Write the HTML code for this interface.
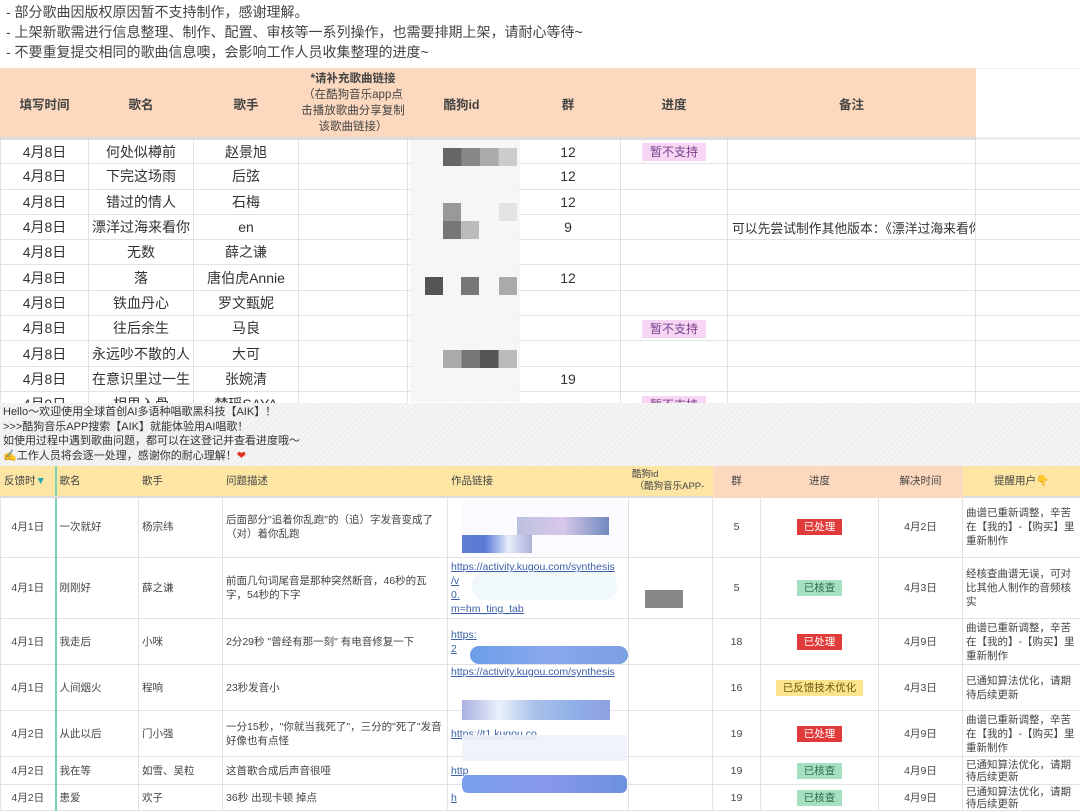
<!DOCTYPE html>
<html><head><meta charset="utf-8"><style>
*{margin:0;padding:0;box-sizing:border-box}
body{width:1080px;height:810px;overflow:hidden;background:#fff;position:relative;font-family:"Liberation Sans","Noto Sans CJK SC",sans-serif;color:#333}
.notes{position:absolute;left:6px;top:2px;font-size:14px;line-height:20px;color:#444}
table{border-collapse:collapse;table-layout:fixed;position:absolute;left:0}
td{border:1px solid #e2e2e2;overflow:hidden;white-space:nowrap}
#t1{top:68px;width:1080px;font-size:14px;color:#333}
#t1 td{text-align:center;height:25.3px;padding:0}
#t1 tr.h td{background:#fcd9be;height:70px;font-weight:bold;font-size:12.5px;color:#444;border-color:#fcd9be;border-bottom:3px solid #ddd}
#t1 tr.h td.w{background:#fff;border-color:#eee}
.pk{background:#f6d6f4;color:#7a3f8c;font-size:12px;padding:2px 8px}
.mid{position:absolute;left:0;top:403px;width:1080px;height:63px;background:repeating-linear-gradient(135deg,#f4f4f4 0 3px,#ececec 3px 4px)}
.mid div{font-size:11px;line-height:14.5px;color:#333;padding-left:3px;padding-top:2px}
#t2{top:466px;width:1080px;font-size:10.5px;color:#444}
#t2 td{padding:0 3px;white-space:normal;line-height:14px}
#t2 td .cl{max-height:24px;overflow:hidden;line-height:12px}
#t2 tr.h td{background:#fde6a4;height:30px;border-color:#fde6a4;border-bottom:2px solid #ddd;font-size:10.5px;white-space:nowrap}
#t2 tr.h td.p{background:#fcd9be;border-color:#fcd9be}
#t2 td.c{text-align:center}
.red{background:#e03a3a;color:#fff;padding:2px 7px;font-size:10.5px}
.grn{background:#a6e0c3;color:#2f6e4f;padding:2px 7px;font-size:10.5px}
.yl{background:#fbe48c;color:#6b5a10;padding:2px 7px;font-size:10.5px}
.ab{position:absolute}
.lnk{color:#3a5ea8;text-decoration:underline}
</style></head><body>
<div class="notes">- 部分歌曲因版权原因暂不支持制作，感谢理解。<br>- 上架新歌需进行信息整理、制作、配置、审核等一系列操作，也需要排期上架，请耐心等待~<br>- 不要重复提交相同的歌曲信息噢，会影响工作人员收集整理的进度~</div>
<table id="t1">
<colgroup><col style="width:88px"><col style="width:105px"><col style="width:105px"><col style="width:109px"><col style="width:108px"><col style="width:105px"><col style="width:107px"><col style="width:248px"><col style="width:105px"></colgroup>
<tr class="h"><td>填写时间</td><td>歌名</td><td>歌手</td><td style="font-weight:normal;line-height:16px;white-space:normal;font-size:11.5px"><b>*请补充歌曲链接</b><br>（在酷狗音乐app点击播放歌曲分享复制该歌曲链接）</td><td>酷狗id</td><td>群</td><td>进度</td><td>备注</td><td class="w"></td></tr>
<tr><td>4月8日</td><td>何处似樽前</td><td>赵景旭</td><td></td><td></td><td>12</td><td><span class="pk">暂不支持</span></td><td></td><td></td></tr>
<tr><td>4月8日</td><td>下完这场雨</td><td>后弦</td><td></td><td></td><td>12</td><td></td><td></td><td></td></tr>
<tr><td>4月8日</td><td>错过的情人</td><td>石梅</td><td></td><td></td><td>12</td><td></td><td></td><td></td></tr>
<tr><td>4月8日</td><td>漂洋过海来看你</td><td>en</td><td></td><td></td><td>9</td><td></td><td style="text-align:left;padding-left:4px;font-size:12.8px">可以先尝试制作其他版本：《漂洋过海来看你》刘明湘</td><td></td></tr>
<tr><td>4月8日</td><td>无数</td><td>薛之谦</td><td></td><td></td><td></td><td></td><td></td><td></td></tr>
<tr><td>4月8日</td><td>落</td><td>唐伯虎Annie</td><td></td><td></td><td>12</td><td></td><td></td><td></td></tr>
<tr><td>4月8日</td><td>铁血丹心</td><td>罗文甄妮</td><td></td><td></td><td></td><td></td><td></td><td></td></tr>
<tr><td>4月8日</td><td>往后余生</td><td>马良</td><td></td><td></td><td></td><td><span class="pk">暂不支持</span></td><td></td><td></td></tr>
<tr><td>4月8日</td><td>永远吵不散的人</td><td>大可</td><td></td><td></td><td></td><td></td><td></td><td></td></tr>
<tr><td>4月8日</td><td>在意识里过一生</td><td>张婉清</td><td></td><td></td><td>19</td><td></td><td></td><td></td></tr>
<tr><td>4月9日</td><td>相思入骨</td><td>梦瑶SAYA</td><td></td><td></td><td></td><td><span class="pk">暂不支持</span></td><td></td><td></td></tr>
</table>
<div class="ab" style="left:410px;top:140px;width:110px;height:262px;background:rgba(245,245,245,.85)"></div>
<div class="ab" style="left:443px;top:148px;width:74px;height:18px;background:linear-gradient(90deg,#666 0 25%,#888 25% 50%,#aaa 50% 75%,#ccc 75%)"></div>
<div class="ab" style="left:443px;top:203px;width:18px;height:18px;background:#999"></div>
<div class="ab" style="left:499px;top:203px;width:18px;height:18px;background:#e3e3e3"></div>
<div class="ab" style="left:443px;top:221px;width:36px;height:18px;background:linear-gradient(90deg,#777 50%,#bbb 50%)"></div>
<div class="ab" style="left:425px;top:277px;width:18px;height:18px;background:#555"></div>
<div class="ab" style="left:461px;top:277px;width:18px;height:18px;background:#777"></div>
<div class="ab" style="left:499px;top:277px;width:18px;height:18px;background:#aaa"></div>
<div class="ab" style="left:443px;top:350px;width:74px;height:18px;background:linear-gradient(90deg,#aaa 0 25%,#777 25% 50%,#555 50% 75%,#bbb 75%)"></div>
<div class="mid"><div>Hello～欢迎使用全球首创AI多语种唱歌黑科技【AIK】！<br>&gt;&gt;&gt;酷狗音乐APP搜索【AIK】就能体验用AI唱歌！<br>如使用过程中遇到歌曲问题，都可以在这登记并查看进度哦～<br><span style="color:#e8a33a">✍</span>工作人员将会逐一处理，感谢你的耐心理解！<span style="color:#d32">❤</span></div></div>
<table id="t2">
<colgroup><col style="width:55px"><col style="width:83px"><col style="width:84px"><col style="width:225px"><col style="width:181px"><col style="width:84px"><col style="width:48px"><col style="width:118px"><col style="width:84px"><col style="width:118px"></colgroup>
<tr class="h"><td style="border-right:2px solid #7fd0b5">反馈时<span style="color:#2aa">▼</span></td><td>歌名</td><td>歌手</td><td>问题描述</td><td>作品链接</td><td style="line-height:12px;font-size:9.5px">酷狗id<br>&nbsp;（酷狗音乐APP-</td><td class="p c">群</td><td class="p c">进度</td><td class="p c">解决时间</td><td class="c">提醒用户<span style="color:#f5c040">👇</span></td></tr>
<tr style="height:61px"><td class="c" style="border-right:2px solid #7fd0b5">4月1日</td><td>一次就好</td><td>杨宗纬</td><td>后面部分"追着你乱跑"的（追）字发音变成了（对）着你乱跑</td><td></td><td></td><td class="c">5</td><td class="c"><span class="red">已处理</span></td><td class="c">4月2日</td><td>曲谱已重新调整，辛苦在【我的】-【购买】里重新制作</td></tr>
<tr style="height:61px"><td class="c" style="border-right:2px solid #7fd0b5">4月1日</td><td>刚刚好</td><td>薛之谦</td><td>前面几句词尾音是那种突然断音，46秒的瓦字，54秒的下字</td><td><span class="lnk">https://activity.kugou.com/synthesis</span><br><span class="lnk">/v</span><br><span class="lnk">0.</span><br><span class="lnk">m=hm_ting_tab</span></td><td></td><td class="c">5</td><td class="c"><span class="grn">已核查</span></td><td class="c">4月3日</td><td>经核查曲谱无误，可对比其他人制作的音频核实</td></tr>
<tr style="height:46px"><td class="c" style="border-right:2px solid #7fd0b5">4月1日</td><td>我走后</td><td>小咪</td><td>2分29秒 "曾经有那一刻" 有电音修复一下</td><td><span class="lnk">https:</span><br><span class="lnk">2</span></td><td></td><td class="c">18</td><td class="c"><span class="red">已处理</span></td><td class="c">4月9日</td><td>曲谱已重新调整，辛苦在【我的】-【购买】里重新制作</td></tr>
<tr style="height:46px"><td class="c" style="border-right:2px solid #7fd0b5">4月1日</td><td>人间烟火</td><td>程响</td><td>23秒发音小</td><td style="vertical-align:top"><span class="lnk">https://activity.kugou.com/synthesis</span></td><td></td><td class="c">16</td><td class="c"><span class="yl">已反馈技术优化</span></td><td class="c">4月3日</td><td>已通知算法优化，请期待后续更新</td></tr>
<tr style="height:46px"><td class="c" style="border-right:2px solid #7fd0b5">4月2日</td><td>从此以后</td><td>门小强</td><td>一分15秒，"你就当我死了"，三分的"死了"发音好像也有点怪</td><td><span class="lnk">https://t1.kugou.co</span></td><td></td><td class="c">19</td><td class="c"><span class="red">已处理</span></td><td class="c">4月9日</td><td>曲谱已重新调整，辛苦在【我的】-【购买】里重新制作</td></tr>
<tr style="height:28px"><td class="c" style="border-right:2px solid #7fd0b5">4月2日</td><td>我在等</td><td>如雪、吴粒</td><td>这首歌合成后声音很哑</td><td><span class="lnk">http</span></td><td></td><td class="c">19</td><td class="c"><span class="grn">已核查</span></td><td class="c">4月9日</td><td><div class="cl">已通知算法优化，请期待后续更新</div></td></tr>
<tr style="height:26px"><td class="c" style="border-right:2px solid #7fd0b5">4月2日</td><td>患爱</td><td>欢子</td><td>36秒 出现卡顿 掉点</td><td><span class="lnk">h</span></td><td></td><td class="c">19</td><td class="c"><span class="grn">已核查</span></td><td class="c">4月9日</td><td><div class="cl">已通知算法优化，请期待后续更新</div></td></tr>
</table>
<div class="ab" style="left:462px;top:500px;width:165px;height:56px;background:rgba(250,250,255,.9)"></div>
<div class="ab" style="left:517px;top:517px;width:92px;height:18px;background:linear-gradient(90deg,#bcc0e0,#d8c8e8,#6f8ac0)"></div>
<div class="ab" style="left:462px;top:535px;width:70px;height:18px;background:linear-gradient(90deg,#5d7fd0,#5a7ad8,#e8eefa,#a8b0d8)"></div>
<div class="ab" style="left:472px;top:572px;width:145px;height:28px;background:rgba(240,248,252,.95);border-radius:12px"></div>
<div class="ab" style="left:645px;top:590px;width:38px;height:18px;background:#888"></div>
<div class="ab" style="left:470px;top:646px;width:158px;height:18px;background:linear-gradient(90deg,#6a9ee8,#8aa8ee,#7a9fe0);border-radius:9px"></div>
<div class="ab" style="left:462px;top:700px;width:148px;height:20px;background:linear-gradient(90deg,#a8b0e0,#e8f0fa,#a8c0ea,#90b0e8,#8fa0e0)"></div>
<div class="ab" style="left:462px;top:735px;width:165px;height:26px;background:rgba(238,242,250,.9)"></div>
<div class="ab" style="left:462px;top:775px;width:165px;height:18px;background:linear-gradient(90deg,#78a0ee,#8898ee,#6c90e0);border-radius:6px"></div>
</body></html>
